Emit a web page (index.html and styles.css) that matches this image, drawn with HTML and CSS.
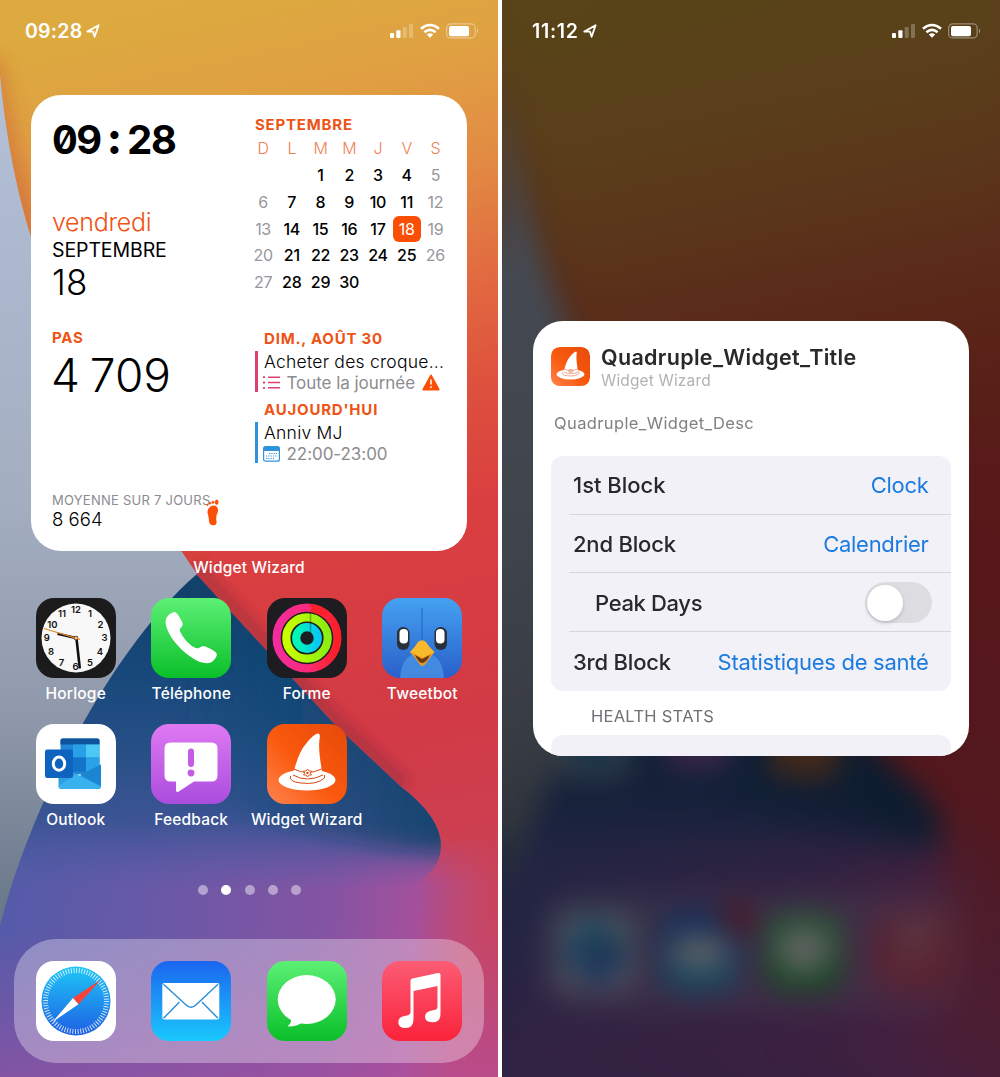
FILE: index.html
```html
<!DOCTYPE html>
<html lang="fr">
<head>
<meta charset="utf-8">
<title>Widget Wizard</title>
<link rel="stylesheet" href="styles.css">
</head>
<body>
<svg class="defs" width="0" height="0" aria-hidden="true">
  <defs>
    <linearGradient id="warm" gradientUnits="userSpaceOnUse" x1="190" y1="0" x2="420" y2="1077">
      <stop offset="0" stop-color="#dcaa3f"/><stop offset=".1" stop-color="#e0a042"/><stop offset=".2" stop-color="#e28a43"/>
      <stop offset=".3" stop-color="#e26a40"/><stop offset=".4" stop-color="#dd503d"/><stop offset=".5" stop-color="#da3f40"/>
      <stop offset=".68" stop-color="#d23a45"/><stop offset=".85" stop-color="#ca4256"/><stop offset="1" stop-color="#c04b80"/>
    </linearGradient>
    <linearGradient id="slate" x1="0" y1="0" x2="0" y2="1">
      <stop offset="0" stop-color="#b3c0d8"/><stop offset=".5" stop-color="#a3aec0"/><stop offset=".75" stop-color="#9099ac"/><stop offset="1" stop-color="#687688"/>
    </linearGradient>
    <linearGradient id="navy" gradientUnits="userSpaceOnUse" x1="0" y1="575" x2="0" y2="890">
      <stop offset="0" stop-color="#124068"/><stop offset=".3" stop-color="#17487a"/><stop offset=".55" stop-color="#264f86"/>
      <stop offset=".78" stop-color="#3a5493" stop-opacity=".95"/><stop offset="1" stop-color="#4f5aa4" stop-opacity="0"/>
    </linearGradient>
    <linearGradient id="tipshade" gradientUnits="userSpaceOnUse" x1="180" y1="0" x2="440" y2="0">
      <stop offset="0" stop-color="#10426a" stop-opacity="0"/><stop offset="1" stop-color="#10426a" stop-opacity=".85"/>
    </linearGradient>
    <linearGradient id="violet" gradientUnits="userSpaceOnUse" x1="0" y1="920" x2="498" y2="960">
      <stop offset="0" stop-color="#545ba9"/><stop offset=".3" stop-color="#6859a7"/><stop offset=".65" stop-color="#8354a3"/>
      <stop offset=".83" stop-color="#a4509b"/><stop offset=".93" stop-color="#c04a74" stop-opacity=".8"/><stop offset="1" stop-color="#c84562" stop-opacity=".4"/>
    </linearGradient>
    <linearGradient id="magenta" x1="0" y1="0" x2="0" y2="1">
      <stop offset="0" stop-color="#a84fa0" stop-opacity="0"/><stop offset="1" stop-color="#b04ea0" stop-opacity=".75"/>
    </linearGradient>
    <linearGradient id="fade" gradientUnits="userSpaceOnUse" x1="0" y1="835" x2="0" y2="886">
      <stop offset="0" stop-color="#000"/><stop offset="1" stop-color="#fff"/>
    </linearGradient>
    <mask id="fadeIn"><rect width="498" height="1077" fill="url(#fade)"/></mask>
    <filter id="b6" x="-30%" y="-30%" width="160%" height="160%"><feGaussianBlur stdDeviation="6"/></filter>
    <filter id="b10" x="-30%" y="-30%" width="160%" height="160%"><feGaussianBlur stdDeviation="10"/></filter>
    <clipPath id="screen"><rect width="498" height="1077"/></clipPath>
    <clipPath id="tip"><path d="M196 574L335 725L400 786Q441 817 441 846Q440 866 425 877L412 888H0Q32 800 90 700Q135 625 196 574Z"/></clipPath>

    <linearGradient id="green" x1="0" y1="0" x2="0" y2="1"><stop offset="0" stop-color="#5cf075"/><stop offset="1" stop-color="#0abf29"/></linearGradient>
    <linearGradient id="ringOuter"><stop offset="0" stop-color="#f22c9c"/><stop offset=".5" stop-color="#fa2a7c"/><stop offset=".75" stop-color="#fb2848"/><stop offset="1" stop-color="#fa1e28"/></linearGradient>
    <linearGradient id="ringMid"><stop offset="0" stop-color="#c8ff00"/><stop offset="1" stop-color="#8cee12"/></linearGradient>
    <linearGradient id="ringIn"><stop offset="0" stop-color="#00f8b4"/><stop offset="1" stop-color="#08c8f4"/></linearGradient>
    <linearGradient id="bird" x1="0" y1="0" x2="0" y2="1"><stop offset="0" stop-color="#44a2f2"/><stop offset="1" stop-color="#2a5fc8"/></linearGradient>
    <linearGradient id="purple" x1="0" y1="0" x2="0" y2="1"><stop offset="0" stop-color="#df79f2"/><stop offset="1" stop-color="#aa4ddd"/></linearGradient>
    <linearGradient id="orange" x1="1" y1="0" x2="0" y2="1"><stop offset="0" stop-color="#e6490a"/><stop offset=".55" stop-color="#fa5a0e"/><stop offset="1" stop-color="#ff8350"/></linearGradient>
    <linearGradient id="safari" x1="0" y1="0" x2="0" y2="1"><stop offset="0" stop-color="#1fc6f8"/><stop offset="1" stop-color="#1e5fe2"/></linearGradient>
    <linearGradient id="mail" x1="0" y1="0" x2="0" y2="1"><stop offset="0" stop-color="#1b66ef"/><stop offset="1" stop-color="#1ac8fd"/></linearGradient>
    <linearGradient id="music" x1="0" y1="0" x2="0" y2="1"><stop offset="0" stop-color="#fb5c74"/><stop offset="1" stop-color="#fa233b"/></linearGradient>

    <symbol id="wallpaper" viewBox="0 0 498 1077" preserveAspectRatio="none">
      <g clip-path="url(#screen)">
        <rect width="498" height="1077" fill="url(#warm)"/>
        <path d="M-10 60Q10 190 50 290T190 560" fill="none" stroke="#c2452c" stroke-opacity=".4" stroke-width="22" filter="url(#b10)"/>
        <path d="M196 566L335 720L405 785" fill="none" stroke="#7d2038" stroke-opacity=".4" stroke-width="14" filter="url(#b6)"/>
        <g mask="url(#fadeIn)"><rect width="498" height="1077" fill="url(#violet)"/></g>
        <g clip-path="url(#tip)">
          <rect y="570" width="498" height="330" fill="url(#violet)"/>
          <rect y="570" width="498" height="330" fill="url(#navy)"/>
          <path d="M180 570H455V852Q380 856 180 800Z" fill="url(#tipshade)" filter="url(#b10)"/>
        </g>
        <rect y="930" width="498" height="147" fill="url(#magenta)" opacity=".65"/>
        <path d="M0 75C6 140 18 195 31 237C60 340 120 460 182 552L197 574C120 640 35 790 0 925Z" fill="url(#slate)"/>
      </g>
    </symbol>
    <symbol id="arrow" viewBox="0 0 14 14"><path d="M1.3 7.6L12.6 1.2L8.6 12.8L7 7.6Z" fill="none" stroke="#fff" stroke-width="1.8" stroke-linejoin="round"/></symbol>
    <symbol id="radios" viewBox="0 0 90 16">
      <g fill="#fff">
        <rect x="0" y="10" width="4" height="5" rx="1"/><rect x="6.3" y="7.3" width="4.2" height="7.7" rx="1"/>
        <g opacity=".25"><rect x="12.7" y="4" width="4" height="11" rx="1"/><rect x="19" y="1" width="4" height="14" rx="1"/></g>
        <path d="M40 14.8L36.8 11.5Q40 9 43.2 11.5Z"/>
        <rect x="59" y="3" width="20" height="10.3" rx="2"/>
        <path d="M87 5.5Q89.4 7.8 87 10.4Z" opacity=".45"/>
      </g>
      <g fill="none" stroke="#fff">
        <path d="M31 5.7Q40-1.7 49 5.7M34.4 9.2Q40 4.6 45.6 9.2" stroke-width="2.6"/>
        <rect x="56.6" y=".9" width="28.6" height="14" rx="4" stroke-opacity=".4" stroke-width="1.2"/>
      </g>
    </symbol>
    <symbol id="wizard" viewBox="0 0 80 80">
      <rect width="80" height="80" rx="18" fill="url(#orange)"/>
      <ellipse cx="40" cy="56" rx="28.5" ry="10.5" fill="#fff"/>
      <path d="M26.5 48C30 36 33 27 38 21C42 16 46 11 50.5 9.5C53.5 9 53 13 52.3 17C51.5 26 53.5 38 55 48V54Q40 62 25 54Z" fill="#fff"/>
      <path d="M27 45Q40 52 54.5 45M26 51Q40 59 56 51M23.5 52Q22 58 34 59Q50 61 57.5 54V51" fill="none" stroke="#d8480e" stroke-width="1"/>
      <path d="M40.5 45L42 47L44.5 47L43.3 49L44.5 51H42L40.5 53L39 51H36.5L37.7 49L36.5 47H39Z" fill="#fff" stroke="#d8480e" stroke-width=".9"/>
      <circle cx="40.5" cy="49" r="1.2" fill="#d8480e"/>
    </symbol>
    <symbol id="safariIcon" viewBox="0 0 80 80">
      <rect width="80" height="80" rx="18" fill="#fff"/>
      <circle cx="40" cy="40" r="34.5" fill="url(#safari)"/>
      <circle cx="40" cy="40" r="30.5" fill="none" stroke="#fff" stroke-opacity=".85" stroke-width="5" stroke-dasharray=".9 1.761"/>
      <path d="M64.5 19L37 37L42.5 43.3Z" fill="#fb4036"/><path d="M16.5 61L37 37L42.5 43.3Z" fill="#fff"/>
    </symbol>
    <symbol id="mailIcon" viewBox="0 0 80 80">
      <rect width="80" height="80" rx="18" fill="url(#mail)"/>
      <rect x="11.3" y="22" width="57" height="36.5" rx="2" fill="#fff"/>
      <path d="M12.5 23.3L34 43Q40 49.5 46 43L67 23.3M12.5 57.3L28.5 41M67 57.3L51 41" fill="none" stroke="#2a8fd6" stroke-width="1.4"/>
    </symbol>
    <symbol id="messagesIcon" viewBox="0 0 80 80">
      <rect width="80" height="80" rx="18" fill="url(#green)"/>
      <ellipse cx="39.7" cy="38.5" rx="29" ry="24.4" fill="#fff"/>
      <path d="M23 55Q26 61 20.5 65.5Q29 66 36 61Z" fill="#fff"/>
    </symbol>
    <symbol id="musicIcon" viewBox="0 0 80 80">
      <rect width="80" height="80" rx="18" fill="url(#music)"/>
      <path d="M28.5 20Q28.5 18 30.5 17.6L56 12Q58.5 11.5 58.5 14V53Q58.5 61.5 50 61.3Q43 61 43 55.5Q43.3 50.5 50 49.5Q55.5 49 55.500 46V25L31.500 30V58Q31.500 67 23.500 67Q16.300 67 16.300 61Q16.500 56 22.500 55Q28.500 54.500 28.500 51Z" fill="#fff"/>
    </symbol>
  </defs>
</svg>

<main class="screens">
  <section class="phone home">
    <svg class="wallpaper" width="498" height="1077"><use href="#wallpaper"/></svg>
    <header class="status">
      <span class="status-time">09:28</span>
      <svg class="loc" width="14" height="14"><use href="#arrow"/></svg>
      <svg class="radios" width="90" height="16"><use href="#radios"/></svg>
    </header>

    <article class="widget">
      <div class="col">
        <div class="digital">09<span class="colon">:</span>28</div>
        <div class="weekday">vendredi</div>
        <div class="month">SEPTEMBRE</div>
        <div class="day">18</div>
        <div class="caption">PAS</div>
        <div class="steps">4 709</div>
        <div class="average">
          <div>
            <div class="avg-label">MOYENNE SUR 7 JOURS</div>
            <div class="avg-value">8 664</div>
          </div>
          <svg class="foot" width="14" height="27" viewBox="0 0 14 27" fill="#fb4f05">
            <path d="M3 9Q6 5.500 10 7Q13 9 11.500 14Q9.500 17 10.500 22Q11 26 7.500 26.300Q3.500 26.500 3 22Q2.800 18 1.800 15Q.8 11.500 3 9Z"/>
            <ellipse cx="10.700" cy="3.200" rx="1.800" ry="2.600"/><circle cx="7" cy="3.300" r="1.400"/><circle cx="4" cy="4.200" r="1.200"/><circle cx="1.500" cy="6" r="1"/>
          </svg>
        </div>
      </div>
      <div class="col">
        <div class="caption cal-title">SEPTEMBRE</div>
        <div class="calendar">
          <i>D</i><i>L</i><i>M</i><i>M</i><i>J</i><i>V</i><i>S</i>
          <b></b><b></b><b>1</b><b>2</b><b>3</b><b>4</b><s>5</s>
          <s>6</s><b>7</b><b>8</b><b>9</b><b>10</b><b>11</b><s>12</s>
          <s>13</s><b>14</b><b>15</b><b>16</b><b>17</b><b class="today">18</b><s>19</s>
          <s>20</s><b>21</b><b>22</b><b>23</b><b>24</b><b>25</b><s>26</s>
          <s>27</s><b>28</b><b>29</b><b>30</b>
        </div>
        <div class="agenda">
          <div class="caption">DIM., AOÛT 30</div>
          <div class="event">
            <div class="ev-title">Acheter des croque...</div>
            <div class="ev-info">
              <svg width="17" height="13" viewBox="0 0 17 13" stroke="#e0406f" fill="none" stroke-width="1.500"><path d="M5 1.200H17M5 6.500H17M5 11.800H17"/><path d="M0 1.200H2M0 6.500H2M0 11.800H2" stroke-width="1.800"/></svg>
              <span>Toute la journée</span>
              <svg width="18" height="17" viewBox="0 0 18 17"><path d="M9 1.500L16.700 15.500H1.300Z" fill="#fb4f05" stroke="#fb4f05" stroke-width="1.800" stroke-linejoin="round"/><path d="M9 5.500V10.500M9 12.200V13.900" stroke="#fff" stroke-width="1.500"/></svg>
            </div>
          </div>
          <div class="caption">AUJOURD'HUI</div>
          <div class="event blue">
            <div class="ev-title">Anniv MJ</div>
            <div class="ev-info">
              <svg width="17" height="16" viewBox="0 0 17 16"><rect x=".6" y=".6" width="15.800" height="14.600" rx="2" fill="#fff" stroke="#2e93dc" stroke-width="1.200"/><path d="M.5 5V2.500Q.5.500 2.500.5H14.500Q16.500.5 16.500 2.500V5Z" fill="#2e93dc"/><path d="M6 7.500H14M3 10H14M3 12.500H11" stroke="#2e93dc" stroke-width="1.200" stroke-dasharray="1.200 1.100"/></svg>
              <span>22:00-23:00</span>
            </div>
          </div>
        </div>
      </div>
    </article>
    <div class="widget-name"><span class="app-name">Widget Wizard</span></div>

    <div class="apps">
      <div class="app">
        <svg width="80" height="80" viewBox="0 0 80 80">
          <rect width="80" height="80" rx="18" fill="#1b1b1c"/><circle cx="40" cy="40" r="34.500" fill="#f8f8f8"/>
          <g class="numerals">
            <text x="40" y="15.300">12</text><text x="54" y="19.300">1</text><text x="64.500" y="30">2</text><text x="68.500" y="43">3</text><text x="64" y="57">4</text><text x="54" y="67.500">5</text>
            <text x="39.500" y="71.500">6</text><text x="25.500" y="67.500">7</text><text x="15" y="57.300">8</text><text x="10.800" y="43.300">9</text><text x="16.500" y="30">10</text><text x="26" y="19.300">11</text>
          </g>
          <path d="M40.500 40.500L43.800 70.500" stroke="#111" stroke-width="2.600"/><path d="M40 40L21.500 35.800" stroke="#111" stroke-width="2.600"/>
          <circle cx="40" cy="40" r="2.200" fill="#111"/><path d="M44 41.300L8 30.500" stroke="#e58a2c" stroke-width="1.300"/><circle cx="40" cy="40" r="1.300" fill="#fff" stroke="#e58a2c"/>
        </svg>
        <span class="app-name">Horloge</span>
      </div>
      <div class="app">
        <svg width="80" height="80" viewBox="0 0 80 80"><rect width="80" height="80" rx="18" fill="url(#green)"/>
          <path d="M16 19C18 16 22 13.500 24 14C26.500 15.500 30 21 31.500 25C32.500 28 29.500 29.500 28.800 31.500C28.500 34 33 41 38.500 46C43 50 46 51 48 50C50 48.500 51.500 47.800 54 48.500C58 50 63 52.500 65 54.500C67 57 65 60 62 63C59 66 54 65.500 49 64C37 59 22 45 17 33C14 26 14 22.500 16 19Z" fill="#fff"/></svg>
        <span class="app-name">Téléphone</span>
      </div>
      <div class="app">
        <svg width="80" height="80" viewBox="0 0 80 80"><rect width="80" height="80" rx="18" fill="#1d1c20"/>
          <g fill="none" stroke-width="8.200"><circle cx="40" cy="40" r="30.400" stroke="url(#ringOuter)"/><circle cx="40" cy="40" r="20.700" stroke="url(#ringMid)"/><circle cx="40" cy="40" r="10.800" stroke="url(#ringIn)"/></g>
          <path d="M43 5.700A34.500 34.500 0 0 1 62 13.500L56.500 20A26 26 0 0 0 43 14Q46 10 43 5.700Z" fill="#fa202c"/>
          <path d="M43.500 15V36" stroke="#1d1c20" stroke-opacity=".35" stroke-width="1.500"/>
        </svg>
        <span class="app-name">Forme</span>
      </div>
      <div class="app">
        <svg width="80" height="80" viewBox="0 0 80 80"><rect width="80" height="80" rx="18" fill="url(#bird)"/>
          <path d="M18 80Q19 56 40 54Q61 56 62 80Z" fill="#4b96e6" opacity=".75"/>
          <path d="M40 10V43" stroke="#1f66bd" stroke-width="1"/>
          <rect x="15" y="29" width="12.500" height="23" rx="6.200" fill="#28303a"/><rect x="52.500" y="29" width="12.500" height="23" rx="6.200" fill="#28303a"/>
          <rect x="17.500" y="31" width="8.500" height="14.500" rx="4" fill="#fff"/><rect x="54" y="31" width="8.500" height="14.500" rx="4" fill="#fff"/>
          <path d="M28 54Q33 49 36 44Q40 40.500 44 44Q47 49 52.500 54Q48 59 44 65Q40 71 37 65Q33 59 28 54Z" fill="#f8b92c"/>
          <path d="M29 54.500Q35 57 40 60Q46 57 52 54.500Q48 59 44 65Q40 70 37 65Q33 59 29 54.500Z" fill="#e8961b"/>
          <path d="M33 57Q37 59 40 61Q44 59 48 57Q44 65 40 65Q36 64 33 57Z" fill="#6b3a12"/>
        </svg>
        <span class="app-name">Tweetbot</span>
      </div>
      <div class="app">
        <svg width="80" height="80" viewBox="0 0 80 80"><rect width="80" height="80" rx="18" fill="#fff"/>
          <rect x="24.500" y="14.500" width="39" height="36" rx="2" fill="#1f86d8"/>
          <path d="M24.500 20.500V16.500Q24.500 14.500 26.500 14.500H61.500Q63.500 14.500 63.500 16.500V20.500Z" fill="#0e539c"/>
          <rect x="37" y="20.500" width="13" height="13" fill="#28a0e8"/><rect x="50" y="20.500" width="13.500" height="13" fill="#4cc8f4"/><rect x="37" y="33.500" width="13" height="14" fill="#1273c8"/><rect x="50" y="33.500" width="13.500" height="14" fill="#2aa2e8"/>
          <path d="M22.500 41L44 52L65 40.500V62Q65 65 62 65H25.500Q22.500 65 22.500 62Z" fill="#2d9ee2"/>
          <path d="M40 50L65 63Q64 65 62 65H25.500Q23 65 22.500 62Z" fill="#38b2ee"/><path d="M65 40.500V62L44 51Z" fill="#1b85d2"/>
          <rect x="9" y="25.500" width="28" height="28.500" rx="2.200" fill="#0d63bd"/>
          <ellipse cx="23" cy="39.700" rx="5.700" ry="6.600" fill="none" stroke="#fff" stroke-width="3"/>
        </svg>
        <span class="app-name">Outlook</span>
      </div>
      <div class="app">
        <svg width="80" height="80" viewBox="0 0 80 80"><rect width="80" height="80" rx="18" fill="url(#purple)"/>
          <path d="M19.500 18.500H60.500Q66.500 18.500 66.500 24.500V51.500Q66.500 57.500 60.500 57.500H43L27 68Q25 68.500 25 66V57.500H19.500Q13.500 57.500 13.500 51.500V24.500Q13.500 18.500 19.500 18.500Z" fill="#fff"/>
          <rect x="37" y="24.500" width="6" height="18.500" rx="3" fill="#c45ce6"/><circle cx="40" cy="49" r="3.400" fill="#c45ce6"/></svg>
        <span class="app-name">Feedback</span>
      </div>
      <div class="app">
        <svg width="80" height="80"><use href="#wizard"/></svg>
        <span class="app-name">Widget Wizard</span>
      </div>
    </div>

    <div class="pages"><span></span><span class="on"></span><span></span><span></span><span></span></div>

    <nav class="dock">
      <svg width="80" height="80"><use href="#safariIcon"/></svg>
      <svg width="80" height="80"><use href="#mailIcon"/></svg>
      <svg width="80" height="80"><use href="#messagesIcon"/></svg>
      <svg width="80" height="80"><use href="#musicIcon"/></svg>
    </nav>
  </section>

  <section class="phone settings">
    <svg class="wallpaper blurred" width="498" height="1077" viewBox="0 0 498 1077">
      <use href="#wallpaper" x="-60" y="-60" width="618" height="1197"/>
      <use href="#wallpaper" x="0" y="-10" width="498" height="1077"/>
      <rect x="38" y="893" width="422" height="118" rx="34" fill="#fff" fill-opacity=".18"/>
      <g opacity=".92">
        <rect x="56" y="680" width="72" height="98" rx="17" fill="#86a3b8"/><circle cx="92" cy="745" r="20" fill="#2484c8"/>
        <rect x="162" y="670" width="70" height="98" rx="17" fill="#9f60bc"/>
        <rect x="268" y="680" width="70" height="98" rx="17" fill="#b8683a"/>
        <use href="#safariIcon" x="57" y="915" width="74" height="74"/>
        <use href="#mailIcon" x="161" y="915" width="74" height="74"/><circle cx="236" cy="918" r="15" fill="#d02c38"/>
        <use href="#messagesIcon" x="265" y="915" width="74" height="74"/>
        <use href="#musicIcon" x="372" y="915" width="74" height="74" opacity=".7"/>
      </g>
    </svg>
    <div class="dim"></div>
    <header class="status">
      <span class="status-time">11:12</span>
      <svg class="loc" width="14" height="14"><use href="#arrow"/></svg>
      <svg class="radios" width="90" height="16"><use href="#radios"/></svg>
    </header>
    <article class="panel">
      <div class="panel-head">
        <svg width="39" height="39"><use href="#wizard"/></svg>
        <div>
          <h1>Quadruple_Widget_Title</h1>
          <p class="panel-sub">Widget Wizard</p>
        </div>
      </div>
      <p class="panel-desc">Quadruple_Widget_Desc</p>
      <div class="group">
        <div class="row"><span>1st Block</span><span class="value">Clock</span></div>
        <div class="row"><span>2nd Block</span><span class="value">Calendrier</span></div>
        <div class="row indent"><span>Peak Days</span><span class="toggle"></span></div>
        <div class="row"><span>3rd Block</span><span class="value">Statistiques de santé</span></div>
      </div>
      <h2>HEALTH STATS</h2>
      <div class="group next"></div>
    </article>
  </section>
</main>
</body>
</html>
```
FILE: styles.css
```css
* { box-sizing: border-box; margin: 0; padding: 0; }
body { width: 1000px; height: 1077px; overflow: hidden; background: #fff; font-family: Inter, "Liberation Sans", sans-serif; }
svg { display: block; flex: none; }
.defs { position: absolute; }
.screens { display: flex; justify-content: space-between; height: 1077px; }
.phone { position: relative; width: 498px; height: 1077px; overflow: hidden; isolation: isolate; }
.wallpaper { position: absolute; inset: 0; z-index: -2; }
.wallpaper.blurred { overflow: visible; filter: blur(14px); }
.dim { position: absolute; inset: 0; z-index: -1; background: rgba(0, 0, 0, .6); }

.status { display: flex; align-items: center; height: 62px; padding: 0 18px 0 25px; color: #fff; }
.status-time { font-size: 19.5px; font-weight: 600; letter-spacing: .25px; line-height: 20px; }
.loc { margin-left: 4px; }
.radios { margin-left: auto; }
.settings .status { padding: 0 18px 0 30px; }
.settings .status-time { letter-spacing: .7px; }

.widget { display: grid; grid-template-columns: 197px 201px; margin: 33px 0 0 31px; width: 436px; height: 456px; padding: 20px 0 0 21px; border-radius: 30px; background: #fff; color: #000; }
.caption { color: #ee5315; font-size: 15px; font-weight: 700; letter-spacing: .8px; line-height: 20px; white-space: nowrap; }
.digital { height: 92px; font-size: 40px; font-weight: 700; line-height: 50px; letter-spacing: -1.7px; font-feature-settings: "zero", "tnum"; white-space: nowrap; }
.colon { display: inline-block; width: 26.5px; text-align: center; font-weight: 800; font-size: 44px; line-height: 40px; }
.weekday { color: #ee5315; font-size: 25px; font-weight: 300; line-height: 31px; letter-spacing: -.3px; }
.month { font-size: 19.5px; line-height: 25px; letter-spacing: -.1px; }
.day { font-size: 35px; font-weight: 300; line-height: 38px; height: 65px; letter-spacing: .2px; }
.steps { height: 143px; font-size: 46px; font-weight: 300; line-height: 55px; letter-spacing: 0; word-spacing: -3px; white-space: nowrap; margin-left: -1px; }
.average { display: flex; align-items: flex-start; white-space: nowrap; }
.avg-label { color: #8b8b90; font-size: 13px; line-height: 18px; letter-spacing: .25px; }
.avg-value { font-size: 18.5px; font-weight: 350; line-height: 20px; letter-spacing: .2px; word-spacing: -.5px; }
.foot { margin: 8px 0 0 -4px; }

.cal-title { padding-left: 6px; height: 19.6px; }
.calendar { display: grid; grid-template-columns: repeat(7, 28.72px); grid-auto-rows: 26.8px; align-items: center; justify-items: center; margin: .2px 0 0 -.3px; font-size: 16px; line-height: 26px; letter-spacing: -.3px; }
.calendar i { color: #ef8055; font-style: normal; font-weight: 300; }
.calendar b { font-weight: 450; }
.calendar s { color: #97979b; text-decoration: none; font-weight: 400; }
.calendar .today { width: 28px; border-radius: 6px; background: #fb4f05; color: #fff; text-align: center; font-weight: 400; }
.agenda { padding: 33px 0 0 6px; }
.agenda .caption { padding-left: 9px; }
.event { margin: 2px 0 8px; padding: 0 0 0 6px; border-left: 3px solid #e0406f; height: 41px; white-space: nowrap; }
.event.blue { border-color: #2e93dc; }
.ev-title { font-size: 17.5px; font-weight: 350; line-height: 21px; letter-spacing: .25px; }
.ev-info { display: flex; align-items: center; gap: 6.5px; height: 22px; color: #8c8c90; font-size: 17px; margin-left: -1px; letter-spacing: -.05px; }

.widget-name { display: flex; justify-content: center; height: 47px; padding-top: 6px; }
.app-name { color: #fff; font-size: 15.5px; font-weight: 500; line-height: 22px; letter-spacing: .18px; white-space: nowrap; }
.apps { display: grid; grid-template-columns: repeat(4, 115.5px); grid-auto-rows: 126px; margin-left: 18px; height: 286px; }
.app { display: flex; flex-direction: column; align-items: center; gap: 5px; }
.numerals { font-size: 9.5px; font-weight: 600; text-anchor: middle; fill: #111; }
.pages { display: flex; justify-content: center; gap: 13.4px; padding: 1px 0 0 1px; height: 55px; }
.pages span { width: 10px; height: 10px; border-radius: 50%; background: rgba(255, 255, 255, .45); }
.pages .on { background: #fff; }
.dock { display: flex; justify-content: space-between; align-items: center; margin: 0 14px; height: 124px; padding: 0 22px; border-radius: 42px; background: rgba(255, 255, 255, .32); }

.panel { margin: 259px 0 0 31px; width: 436px; height: 435px; overflow: hidden; border-radius: 30px; background: #fff; padding: 23px 18.5px 0 18px; }
.panel-head { display: flex; gap: 11px; }
.panel-head svg { margin-top: 3px; }
h1 { color: #29292c; font-size: 21.5px; font-weight: 600; line-height: 26px; letter-spacing: .32px; white-space: nowrap; }
.panel-sub { color: #b2b2b5; font-size: 15.5px; line-height: 21px; letter-spacing: .15px; }
.panel-desc { margin: 21px 0 0 3px; color: #818185; font-size: 16.5px; line-height: 22px; letter-spacing: .38px; }
.group { margin-top: 22px; border-radius: 12px; background: #f2f1f7; }
.row { display: flex; align-items: center; justify-content: space-between; height: 58.7px; margin-left: 18px; padding: 1px 22px 0 4px; color: #29292c; font-size: 22px; font-weight: 500; letter-spacing: -.2px; border-bottom: 1px solid #d6d5da; white-space: nowrap; }
.row:first-child { letter-spacing: 0; }
.row:last-child { border: 0; }
.row.indent { padding: 1px 19px 0 26px; letter-spacing: -.35px; }
.value { color: #1c7be0; font-weight: 400; letter-spacing: -.28px; }
.toggle { display: flex; align-items: center; width: 67px; height: 41px; padding-left: 2px; border-radius: 21px; background: #dddce0; }
.toggle::after { content: ""; width: 36px; height: 36px; border-radius: 50%; background: #fff; box-shadow: 0 2px 4px rgba(0, 0, 0, .15); }
h2 { margin: 14.5px 0 0 40px; color: #6f6f74; font-size: 16.5px; font-weight: 400; line-height: 22px; letter-spacing: .27px; }
.group.next { margin-top: 8px; height: 60px; }
```
